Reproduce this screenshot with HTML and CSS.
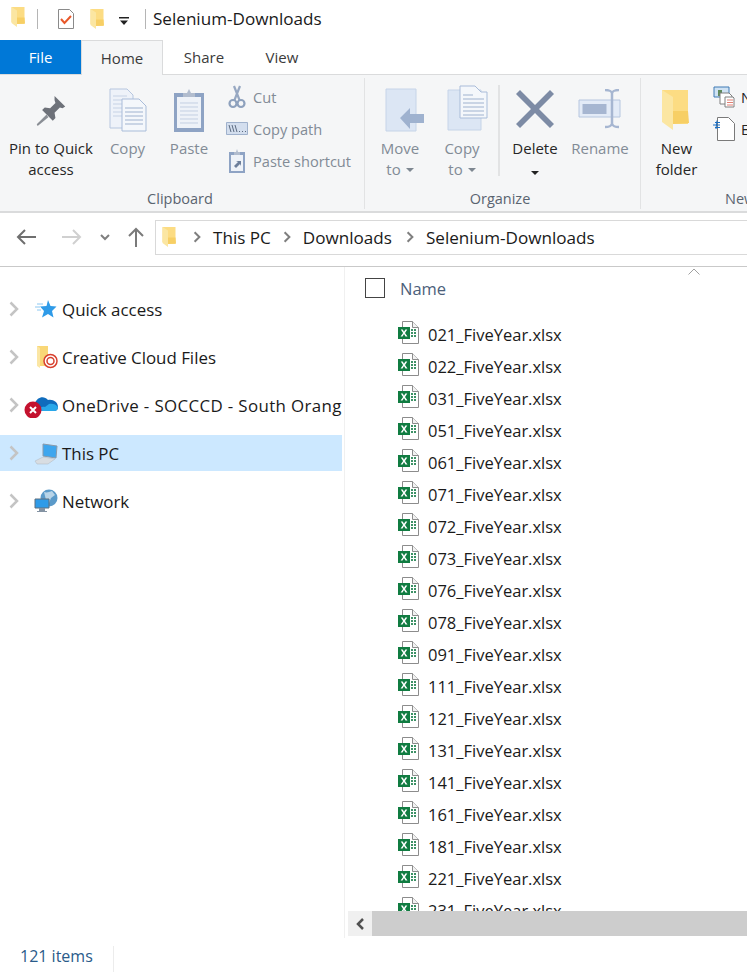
FILE: index.html

```html
<!DOCTYPE html>
<html lang="en">
<head>
  <meta charset="UTF-8" />
  <meta name="viewport" content="width=device-width, initial-scale=1.0" />
  <title>Selenium-Downloads</title>
  <link rel="stylesheet" href="styles.css">
</head>
<body>
  <svg class="defs" width="0" height="0">
    <symbol id="folder" viewBox="0 0 28 42">
      <path d="M1 1h26v34H12L1 31z" fill="#fcdc83"/>
      <path d="M12 22h15l1 12-16 1z" fill="#f7cf65"/>
      <path d="M1 1l11 7v33L1 33z" fill="#fbe6a2"/>
    </symbol>
    <symbol id="excel" viewBox="0 0 21 23">
      <path d="M4.5.5h10l6 6v16h-16z" fill="#fff" stroke="#8c8c8c"/>
      <path d="M14.5.5v6h6" fill="#f2f2f2" stroke="#8c8c8c"/>
      <path d="M13 8h2v2h-2zM16 8h2v2h-2zM13 11h2v2h-2zM16 11h2v2h-2zM13 14h2v2h-2zM16 14h2v2h-2z" fill="#3d9166"/>
      <path d="M0 6h12v12H0z" fill="#107c41"/>
      <path d="M2.800 8.500l2.300 3.400-2.500 3.600h1.900l1.500-2.400 1.500 2.400h2l-2.500-3.600 2.300-3.400H7.400L6 10.800 4.700 8.500z" fill="#fff"/>
    </symbol>
    <symbol id="sep" viewBox="0 0 10 14">
      <path d="M2 1l6 6-6 6" fill="none" stroke="#7f7f7f" stroke-width="2.500"/>
    </symbol>
    <symbol id="navsep" viewBox="0 0 10 16">
      <path d="M1.500 1.500L8 8l-6.500 6.500" fill="none" stroke="#c4c4c4" stroke-width="2.500"/>
    </symbol>
  </svg>

  <div class="titlebar">
    <svg class="tb-folder" width="14" height="22"><use href="#folder"/></svg>
    <span class="tb-line"></span>
    <svg class="tb-check" width="18" height="22" viewBox="0 0 18 22">
      <path d="M1.500 1.500h11l4 4v15h-15z" fill="#fff" stroke="#8a8a8a"/>
      <path d="M4 11l3.500 4L14 8" fill="none" stroke="#e8582a" stroke-width="2"/>
    </svg>
    <svg class="tb-folder2" width="14" height="22"><use href="#folder"/></svg>
    <svg class="tb-drop" width="10" height="8" viewBox="0 0 10 8">
      <path d="M0 0h10v1.500H0zM1 3.500h8L5 8z" fill="#222"/>
    </svg>
    <span class="tb-line tb-line-2"></span>
    <span class="tb-title">Selenium-Downloads</span>
  </div>

  <div class="tabs">
    <div class="tab tab-file">File</div>
    <div class="tab tab-home">Home</div>
    <div class="tab tab-share">Share</div>
    <div class="tab tab-view">View</div>
  </div>

  <div class="ribbon">
    <div class="group group-clipboard">
      <div class="group-body">
        <div class="big big-pin">
          <svg class="big-icon" width="32" height="32" viewBox="0 0 34 36">
            <path d="M21 1l12 12-3 2-3-1-6 6 1 6-3 3L7 17l3-3 6 1 6-6-1-3z" fill="#6d7179"/>
            <path d="M12 22L1 33l1 2 12-10z" fill="#8a8e95"/>
          </svg>
          <span class="lbl">Pin to Quick<br>access</span>
        </div>
        <div class="big big-copy off">
          <svg class="big-icon" width="38" height="44" viewBox="0 0 38 44">
            <path d="M1 1h17l6 6v33H1z" fill="#eef2f9" stroke="#b6c6df"/>
            <path d="M4 8h14M4 12h17M4 16h17M4 20h17M4 24h17M4 28h17" stroke="#c6d2e5"/>
            <path d="M13 11h17l7 7v25H13z" fill="#f4f7fb" stroke="#a9bcd9"/>
            <path d="M16 20h18M16 24h18M16 28h18M16 32h18M16 36h18" stroke="#9fb2cf"/>
          </svg>
          <span class="lbl">Copy</span>
        </div>
        <div class="big big-paste off">
          <svg class="big-icon" width="32" height="44" viewBox="0 0 32 44">
            <path d="M1 5h30v39H1z" fill="#8ea3c4"/>
            <path d="M4 9h24v31H4z" fill="#eef2f8"/>
            <path d="M7 15h18M7 19h18M7 23h18M7 27h18M7 31h18M7 35h18" stroke="#c3cfe2"/>
            <path d="M10 9V5h4l2-4 2 4h4v4z" fill="#b1bcce"/>
          </svg>
          <span class="lbl">Paste</span>
        </div>
        <div class="small-col off">
          <div class="small">
            <svg class="small-icon" width="24" height="24" viewBox="0 0 24 24">
              <path d="M9 1l5.500 14M15 1L9.500 15" stroke="#97a8c2" stroke-width="2.200" fill="none"/>
              <circle cx="8" cy="18.500" r="3.500" fill="none" stroke="#8ea1bd" stroke-width="2.200"/>
              <circle cx="16" cy="18.500" r="3.500" fill="none" stroke="#8ea1bd" stroke-width="2.200"/>
            </svg>
            <span>Cut</span>
          </div>
          <div class="small">
            <svg class="small-icon" width="24" height="24" viewBox="0 0 24 24">
              <path d="M1.500 5.500h21v12h-21z" fill="#d3deee" stroke="#9fb1cc"/>
              <path d="M4 8l2 7M7 8l2 7M10 8l2 7" stroke="#5b6a80"/>
              <path d="M14 14.500h1M17 14.500h1M20 14.500h1" stroke="#5b6a80"/>
            </svg>
            <span>Copy path</span>
          </div>
          <div class="small">
            <svg class="small-icon" width="24" height="24" viewBox="0 0 24 24">
              <path d="M4 3h16v21H4z" fill="#8ea3c4"/>
              <path d="M6 6h12v16H6z" fill="#eef2f8"/>
              <path d="M9 6V3h2l1-3 1 3h2v3z" fill="#b1bcce"/>
              <path d="M9 17l4-4-2-1h5v5l-1-2-4 4z" fill="#6d7f9b"/>
            </svg>
            <span>Paste shortcut</span>
          </div>
        </div>
      </div>
      <div class="group-name">Clipboard</div>
    </div>

    <div class="group group-organize">
      <div class="group-body">
        <div class="big big-move off">
          <svg class="big-icon" width="40" height="44" viewBox="0 0 40 44">
            <path d="M1 1h30v42H1z" fill="#dce6f4" stroke="#c6d4e8"/>
            <path d="M15 30l10-10v6h14v9H25v6z" fill="#9fb2cf"/>
          </svg>
          <span class="lbl">Move<br><span class="arrow-line">to<i class="caret grey"></i></span></span>
        </div>
        <div class="big big-copyto off">
          <svg class="big-icon" width="42" height="46" viewBox="0 0 42 46">
            <path d="M1 5h33v40H1z" fill="#dce6f4" stroke="#c6d4e8"/>
            <path d="M13 1h15l6 6h6v26H13z" fill="#f4f7fb" stroke="#a9bcd9"/>
            <path d="M16 10h10M16 14h21M16 18h21M16 22h21M16 26h21M16 30h21" stroke="#9fb2cf"/>
          </svg>
          <span class="lbl">Copy<br><span class="arrow-line">to<i class="caret grey"></i></span></span>
        </div>
        <span class="inner-sep"></span>
        <div class="big big-delete">
          <svg class="big-icon" width="38" height="38" viewBox="0 0 38 38">
            <path d="M4 0L19 15 34 0l4 4-15 15 15 15-4 4-15-15L4 38l-4-4 15-15L0 4z" fill="#7d8ba5"/>
          </svg>
          <span class="lbl">Delete<br><span class="arrow-line"><i class="caret"></i></span></span>
        </div>
        <div class="big big-rename off">
          <svg class="big-icon" width="44" height="40" viewBox="0 0 44 40">
            <path d="M1 11h41v17H1z" fill="#e3ebf7" stroke="#b6c6df"/>
            <path d="M4.500 15h24v10h-24z" fill="#a6b6d1"/>
            <path d="M27 1c5 0 6 1 7 3 1-2 2-3 7-3M34 4v31M27 38c5 0 6-1 7-3 1 2 2 3 7 3" fill="none" stroke="#a6b6d1" stroke-width="2.500"/>
          </svg>
          <span class="lbl">Rename</span>
        </div>
      </div>
      <div class="group-name">Organize</div>
    </div>

    <div class="group group-new">
      <div class="group-body">
        <div class="big big-newfolder">
          <svg class="big-icon" width="28" height="42"><use href="#folder"/></svg>
          <span class="lbl">New<br>folder</span>
        </div>
        <div class="small-col small-col-new">
          <div class="small small-tight">
            <svg class="small-icon" width="22" height="22" viewBox="0 0 22 22">
              <path d="M1 1h15v10H1z" fill="#cfe2f3" stroke="#3e7ab5"/>
              <path d="M5 4h4v6H5z" fill="#5f8a5c"/>
              <path d="M7 7h9l3 3v8H7z" fill="#fff" stroke="#808080"/>
              <path d="M12 11h8l1 1v9h-9z" fill="#fff" stroke="#808080"/>
              <path d="M14 14h6M14 16.500h6M14 19h6" stroke="#e07f73"/>
            </svg>
            <span>New item</span>
          </div>
          <div class="small small-tight">
            <svg class="small-icon" width="22" height="24" viewBox="0 0 22 24">
              <path d="M4.500.5h11l6 6v17h-17z" fill="#fff" stroke="#7a7a7a"/>
              <path d="M0 8h7M2 5.500h5M2 10.500h5M4 3.500L3 12" stroke="#1b6ec2"/>
            </svg>
            <span>Easy access</span>
          </div>
        </div>
      </div>
      <div class="group-name">New</div>
    </div>
  </div>

  <div class="addressbar">
    <svg class="nav-btn nav-back" width="20" height="16" viewBox="0 0 20 16">
      <path d="M20 8H2M9 1L2 8l7 7" fill="none" stroke="#6f6f6f" stroke-width="2"/>
    </svg>
    <svg class="nav-btn nav-fwd" width="20" height="16" viewBox="0 0 20 16">
      <path d="M0 8h18M11 1l7 7-7 7" fill="none" stroke="#d0d0d0" stroke-width="2"/>
    </svg>
    <svg class="nav-btn nav-down" width="10" height="7" viewBox="0 0 10 7">
      <path d="M1 1l4 4 4-4" fill="none" stroke="#7f7f7f" stroke-width="2"/>
    </svg>
    <svg class="nav-btn nav-up" width="16" height="20" viewBox="0 0 16 20">
      <path d="M8 20V2M1 9l7-7 7 7" fill="none" stroke="#7a7a7a" stroke-width="2"/>
    </svg>
    <div class="pathbox">
      <svg class="path-folder" width="14" height="22"><use href="#folder"/></svg>
      <svg class="path-sep" width="8" height="12"><use href="#sep"/></svg>
      <span>This PC</span>
      <svg class="path-sep" width="8" height="12"><use href="#sep"/></svg>
      <span class="path-downloads">Downloads</span>
      <svg class="path-sep" width="8" height="12"><use href="#sep"/></svg>
      <span>Selenium-Downloads</span>
    </div>
  </div>

  <div class="main">
    <div class="navpane">
      <div class="navrow">
        <svg class="navsep" width="10" height="16"><use href="#navsep"/></svg>
        <svg class="navicon" width="24" height="24" viewBox="0 0 24 24">
          <path d="M14 3l2.500 6 6 .5-4.500 4.500 1.500 6.500-5.500-3.500-6 3.500 2-6.500-4-4.500 6.500-.5z" fill="#2f9be8"/>
          <path d="M3 7h6M1 10h5M3 13h4" stroke="#8cc8f2"/>
        </svg>
        <span>Quick access</span>
      </div>
      <div class="navrow">
        <svg class="navsep" width="10" height="16"><use href="#navsep"/></svg>
        <svg class="navicon" width="24" height="24" viewBox="0 0 24 24">
          <path d="M3 1h11v20H3z" fill="#f9d777"/>
          <path d="M3 1l3 2v20l-3-2z" fill="#fbe6a4"/>
          <circle cx="16.500" cy="16" r="6.500" fill="#fff" stroke="#d8412f" stroke-width="1.500"/>
          <circle cx="16.500" cy="16" r="3.500" fill="none" stroke="#d8412f" stroke-width="1.500"/>
        </svg>
        <span>Creative Cloud Files</span>
      </div>
      <div class="navrow">
        <svg class="navsep" width="10" height="16"><use href="#navsep"/></svg>
        <svg class="navicon navicon-od" width="34" height="26" viewBox="0 0 34 26">
          <path d="M11 11c2-6 9-8 13-3 5-1 10 2 10 7 0 3-2 4-4 4H14c-3 0-5-2-5-4z" fill="#0f6cbd"/>
          <path d="M14 19h16c3 0 4-2 4-4-2-3-6-4-9-3l-4 3c-3-1-6 1-7 4z" fill="#28a8ea"/>
          <circle cx="9" cy="18" r="8.500" fill="#c4122f"/>
          <path d="M6 15l6 6M12 15l-6 6" stroke="#fff" stroke-width="2"/>
        </svg>
        <span class="navtext-wide">OneDrive - SOCCCD - South Orang</span>
      </div>
      <div class="navrow selected">
        <svg class="navsep" width="10" height="16"><use href="#navsep"/></svg>
        <svg class="navicon" width="24" height="24" viewBox="0 0 24 24">
          <path d="M9 3l14 2-1 12-13-2z" fill="#3ea6ee" stroke="#8a9aaa"/>
          <path d="M1 20l8-4 12 2-7 5H3z" fill="#d8dde2" stroke="#aeb6bf" stroke-width=".5"/>
        </svg>
        <span>This PC</span>
      </div>
      <div class="navrow">
        <svg class="navsep" width="10" height="16"><use href="#navsep"/></svg>
        <svg class="navicon" width="24" height="24" viewBox="0 0 24 24">
          <circle cx="15" cy="9" r="8.500" fill="#5b9ac9"/>
          <path d="M10 3c3 1 5 0 8-1l3 4-4 3-2 5-3-3z" fill="#b8d4e8"/>
          <path d="M1 10h14v9H1z" fill="#2f9be8" stroke="#5d6e7e"/>
          <path d="M5 19h6v3H5zM3 22h10v1H3z" fill="#8493a3"/>
        </svg>
        <span>Network</span>
      </div>
    </div>

    <div class="filepane">
      <svg class="sort-caret" width="12" height="7" viewBox="0 0 12 7">
        <path d="M.5 6.500L6 1l5.500 5.500" fill="none" stroke="#a0a0a0"/>
      </svg>
      <div class="colhead">
        <span class="checkbox"></span>
        <span class="colname">Name</span>
      </div>
      <div class="filelist">
        <div class="file"><svg width="21" height="23"><use href="#excel"/></svg><span>021_FiveYear.xlsx</span></div>
        <div class="file"><svg width="21" height="23"><use href="#excel"/></svg><span>022_FiveYear.xlsx</span></div>
        <div class="file"><svg width="21" height="23"><use href="#excel"/></svg><span>031_FiveYear.xlsx</span></div>
        <div class="file"><svg width="21" height="23"><use href="#excel"/></svg><span>051_FiveYear.xlsx</span></div>
        <div class="file"><svg width="21" height="23"><use href="#excel"/></svg><span>061_FiveYear.xlsx</span></div>
        <div class="file"><svg width="21" height="23"><use href="#excel"/></svg><span>071_FiveYear.xlsx</span></div>
        <div class="file"><svg width="21" height="23"><use href="#excel"/></svg><span>072_FiveYear.xlsx</span></div>
        <div class="file"><svg width="21" height="23"><use href="#excel"/></svg><span>073_FiveYear.xlsx</span></div>
        <div class="file"><svg width="21" height="23"><use href="#excel"/></svg><span>076_FiveYear.xlsx</span></div>
        <div class="file"><svg width="21" height="23"><use href="#excel"/></svg><span>078_FiveYear.xlsx</span></div>
        <div class="file"><svg width="21" height="23"><use href="#excel"/></svg><span>091_FiveYear.xlsx</span></div>
        <div class="file"><svg width="21" height="23"><use href="#excel"/></svg><span>111_FiveYear.xlsx</span></div>
        <div class="file"><svg width="21" height="23"><use href="#excel"/></svg><span>121_FiveYear.xlsx</span></div>
        <div class="file"><svg width="21" height="23"><use href="#excel"/></svg><span>131_FiveYear.xlsx</span></div>
        <div class="file"><svg width="21" height="23"><use href="#excel"/></svg><span>141_FiveYear.xlsx</span></div>
        <div class="file"><svg width="21" height="23"><use href="#excel"/></svg><span>161_FiveYear.xlsx</span></div>
        <div class="file"><svg width="21" height="23"><use href="#excel"/></svg><span>181_FiveYear.xlsx</span></div>
        <div class="file"><svg width="21" height="23"><use href="#excel"/></svg><span>221_FiveYear.xlsx</span></div>
        <div class="file"><svg width="21" height="23"><use href="#excel"/></svg><span>231_FiveYear.xlsx</span></div>
      </div>
      <div class="hscroll">
        <div class="hscroll-btn">
          <svg width="9" height="12" viewBox="0 0 9 12"><path d="M7 1L2 6l5 5" fill="none" stroke="#505050" stroke-width="2.500"/></svg>
        </div>
        <div class="hscroll-thumb"></div>
      </div>
    </div>
  </div>

  <div class="statusbar"><span class="status-text">121 items</span></div>
</body>
</html>
```

FILE: styles.css

```css
html, body { margin: 0; padding: 0; }
body { width: 747px; height: 972px; overflow: hidden; background: #fff; font-family: "Open Sans", "Noto Sans", sans-serif; font-size: 16px; color: #1a1a1a; }
.defs { display: block; height: 0; }

.titlebar { display: flex; align-items: center; height: 40px; padding-left: 11px; box-sizing: border-box; }
.tb-folder { margin-top: -6px; }
.tb-line { width: 1px; height: 20px; background: #b5b5b5; margin-left: 12px; margin-top: -3px; }
.tb-check { margin-left: 19px; margin-top: -2px; }
.tb-folder2 { margin-left: 15px; margin-top: -2px; }
.tb-drop { margin-left: 15px; margin-top: 1px; }
.tb-line-2 { margin-left: 16px; }
.tb-title { margin-left: 7px; margin-top: -3px; font-size: 17.1px; }

.tabs { display: flex; height: 35px; box-sizing: border-box; border-bottom: 1px solid #dadbdc; font-size: 15px; }
.tab { display: flex; align-items: center; justify-content: center; height: 34px; box-sizing: border-box; }
.tab-file { width: 81px; background: #0078d7; color: #fff; }
.tab-home { width: 82px; height: 35px; background: #f5f6f7; border: 1px solid #dadbdc; border-bottom: none; color: #3b3b3b; }
.tab-share { width: 82px; color: #3b3b3b; }
.tab-view { width: 74px; color: #3b3b3b; }

.ribbon { display: flex; height: 138px; box-sizing: border-box; background: #f5f6f7; border-bottom: 2px solid #dadbdc; overflow: hidden; font-size: 15px; line-height: 21px; color: #262626; }
.group { display: flex; flex-direction: column; flex: none; box-sizing: border-box; border-right: 1px solid #e2e3e4; margin: 3px 0 2px; }
.group-clipboard { width: 365px; }
.group-organize { width: 276px; }
.group-new { width: 200px; border-right: none; }
.group-body { display: flex; height: 112px; }
.group-name { text-align: center; color: #5a6470; font-size: 14.5px; line-height: 20px; }
.group-clipboard .group-name { padding-right: 4px; }
.group-organize .group-name { padding-right: 5px; }
.group-new .group-name { text-align: left; padding-left: 84px; }

/* icon slot above a label is always 60px tall: top + icon + bottom */
.big { display: flex; flex-direction: column; align-items: center; flex: none; text-align: center; }
.big-icon { display: block; flex: none; }
.lbl { display: block; white-space: nowrap; }
.off { color: #828b96; }
.big-pin { width: 100px; margin-left: 1px; }
.big-pin .big-icon { margin-top: 17px; margin-bottom: 11px; }
.big-copy { width: 51px; margin-left: 1px; }
.big-copy .big-icon, .big-paste .big-icon { margin-top: 10px; margin-bottom: 6px; }
.big-paste { width: 72px; }
.big-move { width: 64px; margin-left: 3px; }
.big-move .big-icon { margin-top: 10px; margin-bottom: 6px; margin-left: 9px; }
.big-copyto { width: 60px; }
.big-copyto .big-icon { margin-top: 7px; margin-bottom: 7px; margin-left: 12px; }
.big-delete { width: 68px; margin-left: 1px; }
.big-delete .big-icon { margin-top: 12px; margin-bottom: 10px; }
.big-rename { width: 62px; }
.big-rename .big-icon { margin-top: 11px; margin-bottom: 9px; }
.big-newfolder { width: 71px; }
.big-newfolder .big-icon { margin-top: 11px; margin-bottom: 7px; margin-left: -4px; }
.inner-sep { flex: none; width: 2px; height: 91px; margin: 7px 0 0 6px; background: #e2e3e4; }

.arrow-line { display: inline-flex; align-items: center; height: 21px; }
.caret { display: inline-block; width: 0; height: 0; border-left: 4px solid transparent; border-right: 4px solid transparent; border-top: 4px solid #222; }
.caret.grey { border-top-color: #7e8791; margin-left: 5px; }

.small-col { display: flex; flex-direction: column; padding-top: 3px; font-size: 14.6px; }
.small { display: flex; align-items: center; height: 32px; white-space: nowrap; }
.small-icon { margin-right: 4px; flex: none; }
.small-col-new { margin-left: 1px; padding-top: 3px; }
.small-tight { color: #262626; }
.small-tight .small-icon { margin-right: 6px; }

.addressbar { display: flex; align-items: center; height: 54px; padding-bottom: 5px; box-sizing: border-box; border-bottom: 1px solid #c9c9c9; }
.nav-btn { flex: none; }
.nav-back { margin-left: 16px; }
.nav-fwd { margin-left: 26px; }
.nav-down { margin-left: 18px; }
.nav-up { margin-left: 18px; }
.pathbox { display: flex; align-items: center; flex: 1; margin-left: 11px; height: 35px; box-sizing: border-box; border: 1px solid #d9d9d9; border-right: none; padding-left: 6px; font-size: 17.1px; white-space: nowrap; }
.path-folder { margin-right: 17px; }
.path-sep { margin-right: 12px; }
.pathbox span { margin-right: 12px; }
.pathbox .path-downloads { margin-right: 14px; }

.main { display: flex; height: 671px; }
.navpane { width: 345px; flex: none; box-sizing: border-box; border-right: 1px solid #f0f0f0; padding-top: 24px; overflow: hidden; font-size: 16.9px; }
.navrow { display: flex; align-items: center; height: 36px; width: 342px; margin-bottom: 12px; padding-left: 9px; box-sizing: border-box; white-space: nowrap; overflow: hidden; }
.navrow.selected { background: #cce8ff; }
.navtext-wide { letter-spacing: 0.35px; }
.navsep { flex: none; margin-right: 15px; }
.navicon { flex: none; margin-right: 4px; }
.navicon-od { margin-left: -10px; }

.filepane { flex: 1; min-width: 0; display: flex; flex-direction: column; position: relative; }
.sort-caret { position: absolute; left: 343px; top: 1px; }
.colhead { display: flex; align-items: center; height: 44px; flex: none; padding-left: 20px; padding-bottom: 2px; box-sizing: border-box; }
.checkbox { width: 18px; height: 18px; border: 1px solid #444; margin-right: 15px; }
.colname { color: #4c607a; font-size: 16.5px; }
.filelist { flex: 1; overflow: hidden; padding-top: 7px; min-height: 0; }
.file { display: flex; align-items: center; height: 32px; padding-left: 53px; font-size: 16.5px; white-space: nowrap; }
.file svg { flex: none; margin-right: 9px; margin-top: -3px; }
.hscroll { display: flex; flex: none; height: 25px; margin-left: 3px; margin-bottom: 2px; background: #cdcdcd; }
.hscroll-btn { display: flex; align-items: center; justify-content: center; width: 24px; background: #f0f0f0; }
.hscroll-thumb { flex: 1; }

.statusbar { height: 34px; box-sizing: border-box; padding: 8px 0 0 20px; font-size: 16px; line-height: 20px; color: #2a5b8a; }
.status-text { display: inline-block; width: 93px; height: 26px; border-right: 1px solid #ececec; }
```
